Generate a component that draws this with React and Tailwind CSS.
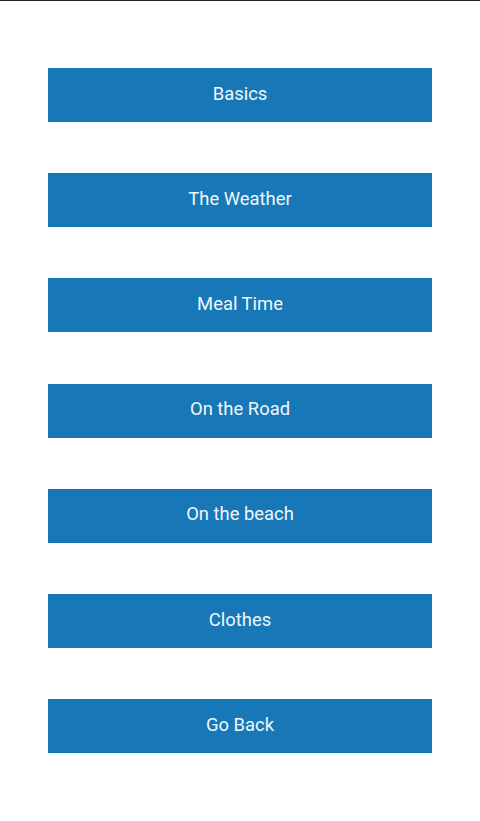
const topics = ['Basics', 'The Weather', 'Meal Time', 'On the Road', 'On the beach', 'Clothes', 'Go Back']

export default function App() {
  return (
    <div className="w-[480px] h-[821px] bg-white border-t border-[#222] font-['Roboto',sans-serif]">
      <div className="flex flex-col gap-[51.2px] pt-[67px] px-12">
        {topics.map((t) => (
          <button
            key={t}
            className="h-[54px] w-full bg-[#1877b7] text-[18.4px] text-[#eef8fd] flex items-center justify-center pb-[3px]"
          >
            {t}
          </button>
        ))}
      </div>
    </div>
  )
}
